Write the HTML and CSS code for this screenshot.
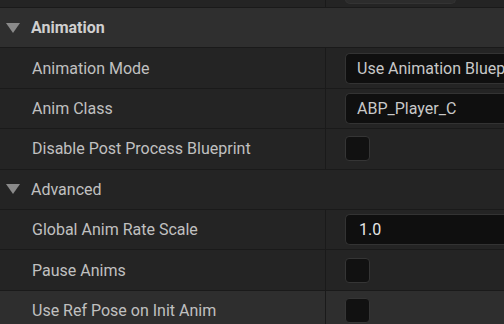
FILE: index.html
```html
<!DOCTYPE html>
<html>
<head>
    <title>Details</title>
    <link rel="stylesheet" href="styles.css">
</head>
<body>
    <div class="panel">
        <div class="row top-row">
            <div class="name"></div>
            <div class="value"><div class="stub"></div></div>
        </div>

        <div class="category">
            <span class="arrow"></span>
            <span class="category-title">Animation</span>
        </div>

        <div class="row">
            <div class="name">Animation Mode</div>
            <div class="value"><div class="field combo">Use Animation Blueprint</div></div>
        </div>
        <div class="row">
            <div class="name">Anim Class</div>
            <div class="value"><div class="field combo">ABP_Player_C</div></div>
        </div>
        <div class="row">
            <div class="name">Disable Post Process Blueprint</div>
            <div class="value"><div class="check"></div></div>
        </div>

        <div class="group">
            <span class="arrow"></span>
            <span>Advanced</span>
        </div>

        <div class="row">
            <div class="name">Global Anim Rate Scale</div>
            <div class="value"><div class="field number">1.0</div></div>
        </div>
        <div class="row">
            <div class="name">Pause Anims</div>
            <div class="value"><div class="check"></div></div>
        </div>
        <div class="row hover">
            <div class="name">Use Ref Pose on Init Anim</div>
            <div class="value"><div class="check"></div></div>
        </div>
    </div>
</body>
</html>
```

FILE: styles.css
```css
body {
    margin: 0;
    padding: 0;
    background-color: #242424;
    font-family: Roboto, "Liberation Sans", sans-serif;
    font-size: 16px;
    color: #c0c0c0;
    overflow: hidden;
}

.panel {
    width: 504px;
    height: 324px;
    overflow: hidden;
}

.row {
    display: flex;
    height: 40.4px;
    box-sizing: border-box;
    border-top: 1px solid #1a1a1a;
    background-color: #242424;
}

.row.hover {
    background-color: #2e2e2e;
}

.top-row {
    height: 7px;
    border-top: none;
}

.name {
    width: 326px;
    flex-shrink: 0;
    box-sizing: border-box;
    padding-left: 32px;
    border-right: 1px solid #1a1a1a;
    display: flex;
    align-items: center;
    white-space: nowrap;
}

.value {
    flex: 1;
    display: flex;
    align-items: center;
    padding-left: 19px;
    overflow: hidden;
}

.top-row .value {
    align-items: flex-start;
}

.stub {
    width: 109px;
    height: 4px;
    margin-top: -1px;
    background-color: #2c2c2c;
    border: 1px solid #333;
    border-top: none;
    border-radius: 0 0 5px 5px;
}

.category,
.group {
    display: flex;
    align-items: center;
    height: 40.4px;
    box-sizing: border-box;
    border-top: 1px solid #1a1a1a;
}

.category {
    background-color: #2f2f2f;
}

.category-title {
    font-weight: bold;
    color: #cfcfcf;
}

.group {
    background-color: #242424;
}

.arrow {
    width: 0;
    height: 0;
    margin-left: 6px;
    margin-right: 11px;
    border-left: 7.5px solid transparent;
    border-right: 7.5px solid transparent;
    border-top: 10px solid #8a8a8a;
}

.field {
    flex-shrink: 0;
    width: 260px;
    height: 31px;
    box-sizing: border-box;
    background-color: #0f0f0f;
    border: 1px solid #333;
    border-right: none;
    border-radius: 5px 0 0 5px;
    display: flex;
    align-items: center;
    padding-left: 11px;
    white-space: nowrap;
    color: #c8c8c8;
}

.field.number {
    padding-left: 13px;
    color: #e6e6e6;
}

.check {
    width: 25px;
    height: 25px;
    box-sizing: border-box;
    background-color: #111;
    border: 1px solid #353535;
    border-radius: 4px;
}
```
